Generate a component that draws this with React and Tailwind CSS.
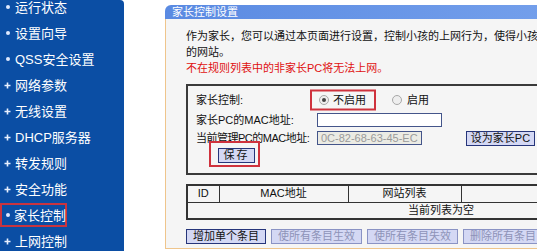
import React from "react";

const menu = [
  { label: "运行状态", plus: false },
  { label: "设置向导", plus: false },
  { label: "QSS安全设置", plus: false },
  { label: "网络参数", plus: true },
  { label: "无线设置", plus: true },
  { label: "DHCP服务器", plus: true },
  { label: "转发规则", plus: true },
  { label: "安全功能", plus: true },
  { label: "家长控制", plus: false, marked: true },
  { label: "上网控制", plus: true },
];

const font = { fontFamily: '"Liberation Sans", "Noto Sans CJK SC", sans-serif' };

function Bullet({ plus }) {
  if (plus) {
    return (
      <svg width="7" height="7" viewBox="0 0 7 7" className="shrink-0">
        <path d="M3.5 0.5v6M0.5 3.5h6" stroke="#e8f0ff" strokeWidth="1.6" />
      </svg>
    );
  }
  return <span className="w-[4px] h-[4px] rounded-full bg-[#dfe9ff] shrink-0 mx-[1.5px]" />;
}

function Radio({ checked }) {
  return (
    <span className="w-[10px] h-[10px] rounded-full border border-[#a8a8a8] bg-[#eeeeee] flex items-center justify-center shrink-0">
      {checked && <span className="w-[4px] h-[4px] rounded-full bg-[#444]" />}
    </span>
  );
}

function Btn({ children, disabled, className = "" }) {
  return (
    <span
      className={`h-[15px] border bg-[#d4d8f4] flex items-center justify-center text-[11px] leading-none whitespace-nowrap ${
        disabled ? "text-[#8e93b8] border-[#8a93c4]" : "text-[#111] border-[#26357a]"
      } ${className}`}
    >
      {children}
    </span>
  );
}

export default function App() {
  return (
    <div className="w-[537px] h-[251px] overflow-hidden flex bg-white" style={font}>
      {/* 左侧菜单 */}
      <div className="w-[124px] shrink-0 bg-[#0b4ea4] rounded-tr-[4px]">
        <div className="-mt-[6px]">
          {menu.map((m) =>
            m.marked ? (
              <div key={m.label} className="h-[26px] flex items-center">
                <div className="h-[24px] w-[67px] border-2 border-[#c9343f] flex items-center pl-[2px] gap-[3px] whitespace-nowrap">
                  <Bullet plus={m.plus} />
                  <span className="text-white text-[13px] leading-none">{m.label}</span>
                </div>
              </div>
            ) : (
              <div key={m.label} className="h-[26px] flex items-center pl-[4px] gap-[4px] whitespace-nowrap">
                <Bullet plus={m.plus} />
                <span className="text-white text-[13px] leading-none">{m.label}</span>
              </div>
            )
          )}
        </div>
      </div>

      {/* 主面板 */}
      <div className="ml-[41px] mt-[5px] w-[600px] shrink-0 flex flex-col">
        <div className="h-[14px] rounded-tl-[6px] bg-linear-to-r from-[#5a8ae2] to-[#82abf0] text-white text-[11px] leading-[14px] pl-[7px]">
          家长控制设置
        </div>
        <div className="h-[230px] border-l border-b border-[#efc58c] bg-[#f5f5f5] pl-[20px] pt-[9px] text-[11px] text-[#111]">
          <p className="leading-[16px] whitespace-nowrap">
            作为家长，您可以通过本页面进行设置，控制小孩的上网行为，使得小孩只能访问指定
          </p>
          <p className="leading-[16px]">的网站。</p>
          <p className="leading-[16px] text-[#e01010]">不在规则列表中的非家长PC将无法上网。</p>

          {/* 设置框 */}
          <div className="mt-[8px] w-[520px] h-[91px] border-2 border-[#3a3a3a] pl-[8px] pt-[4px] whitespace-nowrap">
            <div className="flex h-[20px] items-center">
              <span className="w-[121px]">家长控制:</span>
              <span className="relative flex items-center ml-[2px] gap-[4px]">
                <span className="absolute -left-[9px] top-1/2 -translate-y-1/2 w-[66px] h-[21px] border-2 border-[#cf323d]" />
                <Radio checked />
                <span>不启用</span>
              </span>
              <span className="flex items-center ml-[26px] gap-[5px]">
                <Radio />
                <span>启用</span>
              </span>
            </div>
            <div className="flex h-[14px] items-center mt-[3px]">
              <span className="w-[121px]">家长PC的MAC地址:</span>
              <span className="w-[125px] h-[14px] border border-[#44558a] bg-white" />
            </div>
            <div className="flex h-[14px] items-center mt-[4px]">
              <span className="w-[121px] tracking-[-0.5px]">当前管理PC的MAC地址:</span>
              <span className="w-[105px] h-[14px] border border-[#44558a] bg-[#ebebe4] text-[#9a9a9a] text-[11px] leading-[12px] pl-[3px]">
                0C-82-68-63-45-EC
              </span>
              <Btn className="ml-[44px] w-[69px] h-[14px]">设为家长PC</Btn>
            </div>
            <div className="flex mt-[3px] pl-[22px]">
              <span className="relative">
                <span className="absolute -left-[9px] -top-[7px] w-[51px] h-[26px] border-2 border-[#cf323d]" />
                <Btn className="w-[37px] tracking-[2px]">保存</Btn>
              </span>
            </div>
          </div>

          {/* 规则列表 */}
          <table className="mt-[9px] w-[510px] border-collapse border-2 border-[#333] text-[11px] leading-none">
            <tbody>
              <tr className="h-[17px]">
                <td className="w-[32px] border border-[#333] text-center p-0">ID</td>
                <td className="w-[129px] border border-[#333] text-center p-0">MAC地址</td>
                <td className="w-[113px] border border-[#333] text-center p-0">网站列表</td>
                <td className="border border-[#333] text-center p-0">日程计划</td>
              </tr>
              <tr className="h-[17px]">
                <td colSpan={4} className="border border-[#333] text-center p-0">当前列表为空</td>
              </tr>
            </tbody>
          </table>

          {/* 按钮 */}
          <div className="flex mt-[9px] gap-[5px]">
            <Btn className="px-[6px]">增加单个条目</Btn>
            <Btn disabled className="px-[6px]">使所有条目生效</Btn>
            <Btn disabled className="px-[6px]">使所有条目失效</Btn>
            <Btn disabled className="px-[6px]">删除所有条目</Btn>
          </div>
        </div>
      </div>
    </div>
  );
}
